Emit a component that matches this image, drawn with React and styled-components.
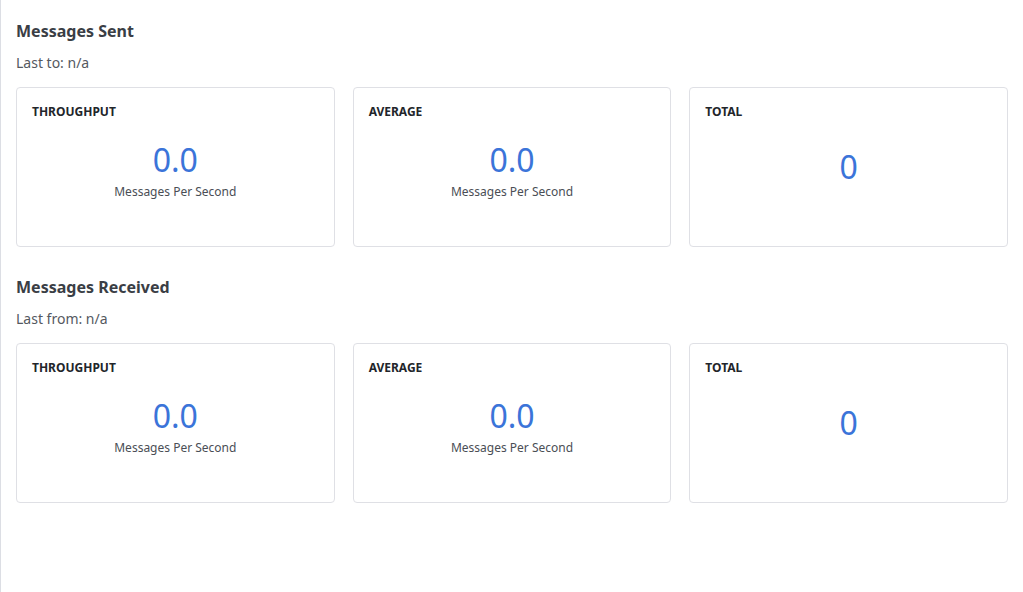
import React from "react";
import styled, { createGlobalStyle } from "styled-components";

const Global = createGlobalStyle`
  html, body { margin: 0; padding: 0; background: #fff; }
  body { font-family: "Noto Sans", "Open Sans", sans-serif; }
  * { box-sizing: border-box; }
`;

const Page = styled.div`
  min-height: 592px;
  border-left: 1px solid #dcdee4;
  padding: 20px 15px 20px 15px;
`;

const Section = styled.section`
  display: flex;
  flex-direction: column;
  & + & { margin-top: 29px; }
`;

const Title = styled.h2`
  margin: 0;
  font-size: 16px;
  line-height: 22px;
  font-weight: 700;
  color: #3a3e45;
`;

const Sub = styled.div`
  margin-top: 11px;
  font-size: 14px;
  line-height: 20px;
  color: #55595f;
`;

const Grid = styled.div`
  margin-top: 14px;
  display: grid;
  grid-template-columns: repeat(3, 1fr);
  gap: 18px;
`;

const Card = styled.div`
  height: 160px;
  border: 1px solid #dfe0e5;
  border-radius: 4px;
  padding: 16px 15px 15px;
  display: flex;
  flex-direction: column;
`;

const Label = styled.div`
  font-size: 12px;
  line-height: 16px;
  font-weight: 700;
  color: #22252a;
`;

const Body = styled.div`
  flex: 1;
  display: flex;
  flex-direction: column;
  align-items: center;
  justify-content: center;
  padding-bottom: ${(p) => (p.$single ? "17px" : "9px")};
`;

const Value = styled.div`
  font-size: 32px;
  line-height: 36px;
  color: #3b74d9;
`;

const Desc = styled.div`
  margin-top: 5px;
  font-size: 12px;
  line-height: 17px;
  color: #4a4e55;
`;

function Stat({ label, value, desc }) {
  return (
    <Card>
      <Label>{label}</Label>
      <Body $single={!desc}>
        <Value>{value}</Value>
        {desc && <Desc>{desc}</Desc>}
      </Body>
    </Card>
  );
}

function Block({ title, sub }) {
  return (
    <Section>
      <Title>{title}</Title>
      <Sub>{sub}</Sub>
      <Grid>
        <Stat label="THROUGHPUT" value="0.0" desc="Messages Per Second" />
        <Stat label="AVERAGE" value="0.0" desc="Messages Per Second" />
        <Stat label="TOTAL" value="0" />
      </Grid>
    </Section>
  );
}

export default function App() {
  return (
    <>
      <Global />
      <Page>
        <Block title="Messages Sent" sub="Last to: n/a" />
        <Block title="Messages Received" sub="Last from: n/a" />
      </Page>
    </>
  );
}
